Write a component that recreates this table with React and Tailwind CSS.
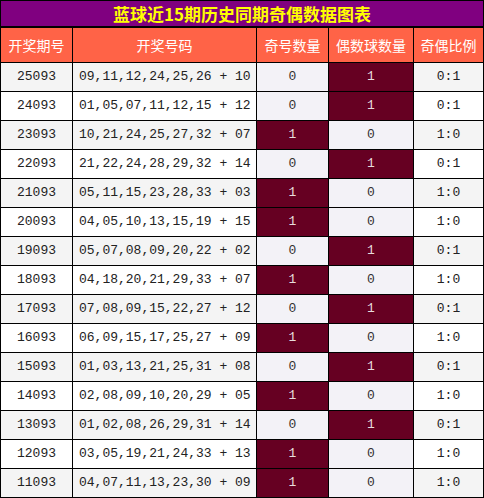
import React from "react";

const rows = [
  ["25093", "09,11,12,24,25,26 + 10", 0],
  ["24093", "01,05,07,11,12,15 + 12", 0],
  ["23093", "10,21,24,25,27,32 + 07", 1],
  ["22093", "21,22,24,28,29,32 + 14", 0],
  ["21093", "05,11,15,23,28,33 + 03", 1],
  ["20093", "04,05,10,13,15,19 + 15", 1],
  ["19093", "05,07,08,09,20,22 + 02", 0],
  ["18093", "04,18,20,21,29,33 + 07", 1],
  ["17093", "07,08,09,15,22,27 + 12", 0],
  ["16093", "06,09,15,17,25,27 + 09", 1],
  ["15093", "01,03,13,21,25,31 + 08", 0],
  ["14093", "02,08,09,10,20,29 + 05", 1],
  ["13093", "01,02,08,26,29,31 + 14", 0],
  ["12093", "03,05,19,21,24,33 + 13", 1],
  ["11093", "04,07,11,13,23,30 + 09", 1],
];

function Hot({ v }) {
  return (
    <div className="h-[29px] border-r border-b border-black bg-[#660022] text-[#e6dcdc] text-[13px] flex items-center justify-center font-['Liberation_Mono','DejaVu_Sans_Mono',monospace]">
      {v}
    </div>
  );
}
function Cold({ v }) {
  return (
    <div className="h-[29px] border-r border-b border-black bg-[#f3f2f7] text-[#333333] text-[13px] flex items-center justify-center font-['Liberation_Mono','DejaVu_Sans_Mono',monospace]">
      {v}
    </div>
  );
}

export default function App() {
  return (
    <div className="w-[484px] h-[498px] bg-white">
      <div className="grid grid-cols-[72px_184px_72px_85px_70px] border-l border-t border-black w-[484px]">
        <div className="col-span-5 h-[27px] border-r border-b-2 border-black bg-[#800080] text-[#ffff00] font-bold text-[17px] flex items-center justify-center leading-none font-['Noto_Sans_CJK_SC','Noto_Sans',sans-serif]">
          蓝球近15期历史同期奇偶数据图表
        </div>
        {["开奖期号", "开奖号码", "奇号数量", "偶数球数量", "奇偶比例"].map((h) => (
          <div key={h} className="h-[35px] border-r border-b border-black bg-[#ff6347] text-white text-[14px] flex items-center justify-center font-['Noto_Sans_CJK_SC','Noto_Sans',sans-serif]">
            {h}
          </div>
        ))}
        {rows.map(([id, nums, odd], i) => {
          const even = i % 2 === 0;
          return (
            <React.Fragment key={id}>
              <div className={even ? "h-[29px] border-r border-b border-black bg-[#f4f4f4] text-[#222222] text-[13px] flex items-center justify-center font-['Liberation_Mono','DejaVu_Sans_Mono',monospace]" : "h-[29px] border-r border-b border-black bg-white text-[#222222] text-[13px] flex items-center justify-center font-['Liberation_Mono','DejaVu_Sans_Mono',monospace]"}>
                {id}
              </div>
              <div className={even ? "h-[29px] border-r border-b border-black bg-[#f4f4f4] text-[#222222] text-[13px] flex items-center pl-[6px] whitespace-pre font-['Liberation_Mono','DejaVu_Sans_Mono',monospace]" : "h-[29px] border-r border-b border-black bg-white text-[#222222] text-[13px] flex items-center pl-[6px] whitespace-pre font-['Liberation_Mono','DejaVu_Sans_Mono',monospace]"}>
                {nums}
              </div>
              {odd ? <Hot v="1" /> : <Cold v="0" />}
              {odd ? <Cold v="0" /> : <Hot v="1" />}
              <div className={even ? "h-[29px] border-r border-b border-black bg-[#f4f4f4] text-[#222222] text-[13px] flex items-center justify-center font-['Liberation_Mono','DejaVu_Sans_Mono',monospace]" : "h-[29px] border-r border-b border-black bg-white text-[#222222] text-[13px] flex items-center justify-center font-['Liberation_Mono','DejaVu_Sans_Mono',monospace]"}>
                {odd ? "1:0" : "0:1"}
              </div>
            </React.Fragment>
          );
        })}
      </div>
    </div>
  );
}
